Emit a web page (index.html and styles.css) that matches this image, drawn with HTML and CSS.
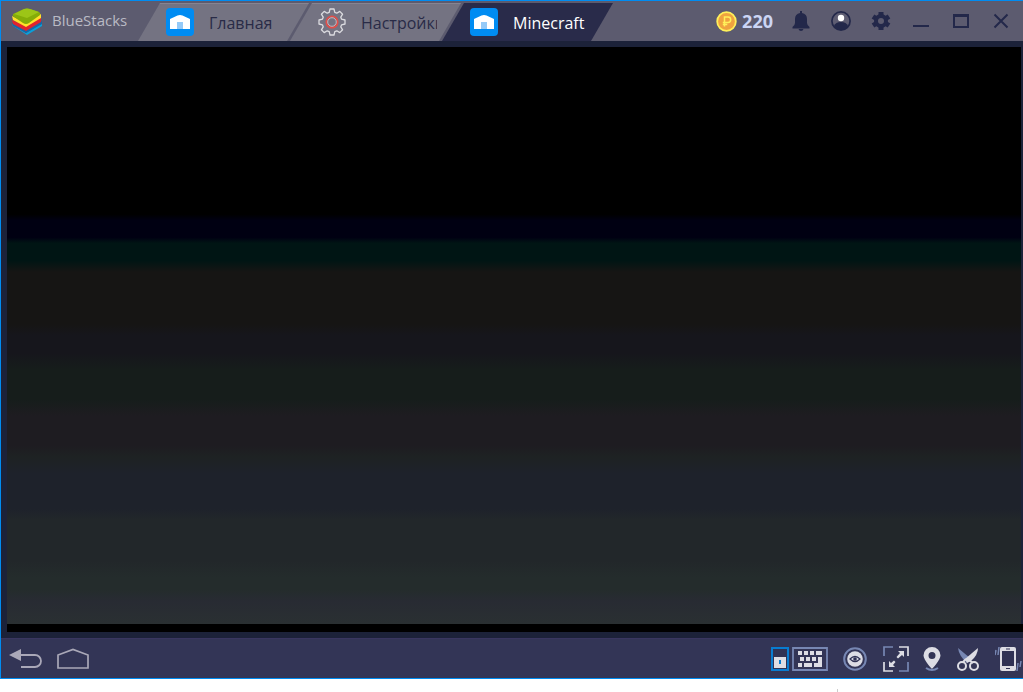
FILE: index.html
```html
<!DOCTYPE html>
<html lang="ru">
<head>
<meta charset="utf-8">
<meta name="viewport" content="width=device-width, initial-scale=1">
<title>BlueStacks</title>
<link rel="stylesheet" href="styles.css">
</head>
<body>
<svg class="defs" aria-hidden="true">
  <symbol id="app-home" viewBox="0 0 28 28">
    <rect width="28" height="28" rx="4" fill="#008cf2"/>
    <path d="M4 12V11L11.500 7.500q2.500-1 5 0L24 11v10H4z" fill="#fff"/>
    <path d="M11 14h6v7h-6z" fill="#94caf8"/>
  </symbol>
</svg>
<div class="window">
  <header class="titlebar">
    <div class="brand">
      <svg class="brand-logo" viewBox="0 0 30 27" aria-hidden="true">
        <path d="M0 16 14 25 30 15v3L15 27 12 25 1 18z" fill="#0b9fd8"/>
        <path d="M0 15 14 22 30 13v3L14 25 1 18z" fill="#1668a8"/>
        <path d="M0 12 14 18 29 9v5L14 23 1 16z" fill="#e0232e"/>
        <path d="M0 8 14 15 29 6v4L14 19 1 12z" fill="#ffe02b"/>
        <path d="M1 6Q0 8 2 9l9 6q3 2 6 0L28 7q1-2-1-3L18 1q-3-1-6 0z" fill="#84ad08"/>
        <path d="M2 6 12 1q3-1 6 0l9 3-12 6z" fill="#9cc517"/>
      </svg>
      <span class="brand-name">BlueStacks</span>
    </div>
    <nav class="tabs">
      <button class="tab" type="button"><svg class="tab-icon" aria-hidden="true"><use href="#app-home"/></svg><span class="tab-label">Главная</span></button>
      <button class="tab" type="button"><svg class="tab-icon" viewBox="-14 -14 28 28" aria-hidden="true">
        <path d="M-2.800-9.600-2-13H2L2.800-9.600 4.800-8.800 7.800-10.600 10.600-7.800 8.800-4.800 9.600-2.800 13-2V2L9.600 2.800 8.800 4.800 10.600 7.800 7.800 10.600 4.800 8.800 2.800 9.600 2 13H-2L-2.800 9.600-4.800 8.800-7.800 10.600-10.600 7.800-8.800 4.800-9.600 2.800-13 2V-2L-9.600-2.800-8.800-4.800-10.600-7.800-7.800-10.600-4.800-8.800z" fill="none" stroke="#dcdce0" stroke-width="1.300" stroke-linejoin="round"/>
        <circle r="5.700" fill="none" stroke="#e04e49" stroke-width="1.700"/><circle r="4.300" fill="none" stroke="#d5c6ca" stroke-width=".8"/></svg><span class="tab-label">Настройки</span></button>
      <button class="tab tab-active" type="button"><svg class="tab-icon" aria-hidden="true"><use href="#app-home"/></svg><span class="tab-label">Minecraft</span></button>
    </nav>
    <div class="controls">
      <button class="points" type="button">
        <svg class="coin" viewBox="0 0 21 21" aria-hidden="true">
          <circle cx="10.500" cy="10.500" r="9.300" fill="#efa33f" stroke="#fff05a" stroke-width="1.800"/>
          <path d="M8.500 15.500V6H12a2.700 2.700 0 0 1 0 5.400H6.800M6.800 13.500h4.500" fill="none" stroke="#fff05a" stroke-width="1.500"/>
        </svg>
        <span>220</span>
      </button>
      <button class="control" type="button" aria-label="Уведомления"><svg class="glyph" viewBox="0 0 20 20" aria-hidden="true">
        <path d="M9 2V0h2v2q5 1 5 6v4q0 2 2.500 4v1.500h-17V16Q4 14 4 12V8q0-5 5-6zM7.500 18h5q-.5 2-2.500 2t-2.500-2z" fill="#23284a"/></svg></button>
      <button class="control" type="button" aria-label="Аккаунт"><svg class="glyph" viewBox="0 0 20 20" aria-hidden="true">
        <circle cx="10" cy="10" r="9.100" fill="#5e5d72" stroke="#23284a" stroke-width="1.700"/>
        <path d="M3 15q1.500-4 7-4t7 4q-2.500 4-7 4t-7-4z" fill="#23284a"/><circle cx="10" cy="7" r="3.200" fill="#fff"/></svg></button>
      <button class="control" type="button" aria-label="Настройки"><svg class="glyph" viewBox="-10 -10 20 20" aria-hidden="true">
        <g stroke="#23284a" stroke-width="5"><path d="M0-9v4M0 5v4M-8-4.500-4-2M4 2l4 2.500M-8 4.500-4 2M4-2l4-2.500"/></g>
        <circle r="5" fill="none" stroke="#23284a" stroke-width="4"/></svg></button>
      <button class="control" type="button" aria-label="Свернуть"><svg class="glyph" viewBox="0 0 20 20" aria-hidden="true"><path d="M2 14h16v2H2z" fill="#23284a"/></svg></button>
      <button class="control" type="button" aria-label="Развернуть"><svg class="glyph" viewBox="0 0 20 20" aria-hidden="true"><path d="M2 3h16v14H2zM4 6v9h12V6z" fill="#23284a" fill-rule="evenodd"/></svg></button>
      <button class="control" type="button" aria-label="Закрыть"><svg class="glyph" viewBox="0 0 20 20" aria-hidden="true"><path d="m3.500 3.500 13 13m0-13-13 13" fill="none" stroke="#23284a" stroke-width="2"/></svg></button>
    </div>
  </header>
  <main class="stage">
    <div class="screen"></div>
  </main>
  <footer class="toolbar">
    <div class="nav">
      <button class="tool" type="button" aria-label="Назад"><svg width="34" height="24" viewBox="0 0 34 24" aria-hidden="true">
        <path d="M0 8 12 2v12z" fill="#aaa8b8"/><path d="M12 8h14a6 6 0 0 1 0 12H12" fill="none" stroke="#aaa8b8" stroke-width="1.800"/></svg></button>
      <button class="tool" type="button" aria-label="Домой"><svg width="32" height="24" viewBox="0 0 32 24" aria-hidden="true">
        <path d="M1 21V8l15-5.500L31 8v13z" fill="none" stroke="#aaa8b8" stroke-width="1.700"/></svg></button>
    </div>
    <div class="tools">
      <div class="keyboard-group">
        <button class="tool" type="button" aria-label="Блокировка клавиш"><svg width="18" height="24" viewBox="0 0 18 24" aria-hidden="true">
          <path d="M1 1h16v22H1z" fill="#303254" stroke="#087cd1" stroke-width="2"/><path d="M3 10h12v11H3z" fill="#dddde4"/><path d="M8 13h2v4H8z" fill="#087cd1"/></svg></button>
        <button class="tool" type="button" aria-label="Клавиатура"><svg width="36" height="24" viewBox="0 0 36 24" aria-hidden="true">
          <path d="M1 1h34v22H1z" fill="none" stroke="#7787b3" stroke-width="1.800"/>
          <path d="M6 4h4v4H6zm6 0h4v4h-4zm6 0h4v4h-4zm6 0h6v4h-6zM8 10h4v4H8zm6 0h4v4h-4zm6 0h4v4h-4zM6 16h4v4H6zm6 0h8v4h-8zm10 0h4v-6h4v10h-8z" fill="#dddde4"/></svg></button>
      </div>
      <button class="tool tool-eye" type="button" aria-label="Видимость"><svg width="24" height="24" viewBox="0 0 24 24" aria-hidden="true">
        <circle cx="12" cy="12" r="10.800" fill="none" stroke="#7787b3" stroke-width="2"/><circle cx="12" cy="12" r="7.800" fill="#dddde4"/>
        <path d="M7 12q5-5 10 0-5 5-10 0z" fill="#dddde4" stroke="#303254" stroke-width="1.200"/><circle cx="12" cy="12" r="1.800" fill="#303254"/></svg></button>
      <button class="tool tool-full" type="button" aria-label="Полный экран"><svg width="26" height="26" viewBox="0 0 26 26" aria-hidden="true">
        <path d="M1 10V1h9M25 16v9h-9" fill="none" stroke="#7787b3" stroke-width="1.700"/>
        <path d="M16 1h9v9M1 16v9h9" fill="none" stroke="#dddde4" stroke-width="1.700"/>
        <path d="M15 5h6v6l-2-2-4 3.500-1.500-1.500L17 7zM6 15v6h6l-2-2 2.500-3-1.500-1.500L8 17z" fill="#dddde4"/></svg></button>
      <button class="tool tool-pin" type="button" aria-label="Местоположение"><svg width="18" height="26" viewBox="0 0 18 26" aria-hidden="true">
        <path d="M9 1a8.500 8.500 0 0 0-8.500 8.500C.5 14 9 23 9 23s8.500-9 8.500-13.500A8.500 8.500 0 0 0 9 1zm0 5a3.500 3.500 0 1 1 0 7 3.500 3.500 0 0 1 0-7z" fill="#dddde4" fill-rule="evenodd"/><path d="M3 22q6 4 12 0" fill="none" stroke="#7787b3" stroke-width="2"/></svg></button>
      <button class="tool tool-cut" type="button" aria-label="Скриншот"><svg width="22" height="26" viewBox="0 0 22 26" aria-hidden="true">
        <path d="M1 2 13 12l-3 5Q2 10 1 2z" fill="#7787b3"/><path d="M21 2 8 13l2 4 4-2Q21 9 21 2z" fill="#dddde4"/>
        <path d="m9 13-3 3m6-2 4 3" stroke="#dddde4" stroke-width="2"/><circle cx="5" cy="20" r="4" fill="none" stroke="#dddde4" stroke-width="2"/><circle cx="17" cy="20" r="4" fill="none" stroke="#dddde4" stroke-width="2"/></svg></button>
      <button class="tool tool-shake" type="button" aria-label="Встряхнуть"><svg width="28" height="26" viewBox="0 0 28 26" aria-hidden="true">
        <rect x="5" y="1" width="16" height="24" rx="2" fill="#dddde4"/><path d="M7 5h12v15H7z" fill="#303254"/><path d="M11 3h4M11 22.500h4" stroke="#303254"/>
        <path d="m4 1-1 8M1 4 0 9m26 6-1 6m-2-4-1 8" fill="none" stroke="#7787b3" stroke-width="1.500"/></svg></button>
    </div>
  </footer>
</div>
<div class="desktop"><i class="speck"></i></div>
</body>
</html>
```
FILE: styles.css
```css
* { box-sizing: border-box; }
body {
  margin: 0;
  min-height: 100vh;
  display: flex;
  flex-direction: column;
  background: #fff;
  font-family: "Open Sans", "Noto Sans", sans-serif;
}
button { border: 0; padding: 0; margin: 0; background: none; color: inherit; font: inherit; cursor: pointer; }
svg { display: block; flex: none; }
.defs { position: absolute; width: 0; height: 0; }
.window {
  flex: 1;
  display: flex;
  flex-direction: column;
  border: 1px solid #008cf2;
  border-right: 0;
  background: #1c2239;
}
.titlebar { display: flex; height: 40px; background: #5c5b6f; }
.brand { display: flex; width: 137px; padding: 7px 0 0 11px; gap: 10px; color: #b9bac4; }
.brand-logo { width: 30px; height: 27px; }
.brand-name { font-size: 15px; line-height: 24px; }
.tabs { display: flex; padding-top: 2px; }
.tab {
  display: flex;
  align-items: center;
  width: 171px;
  height: 38px;
  margin-right: -19px;
  padding: 0 10px 0 28px;
  gap: 15px;
  clip-path: polygon(22px 0, 100% 0, calc(100% - 22px) 100%, 0 100%);
  background: linear-gradient(#858492 1px, #747382 1px);
  color: #292b47;
  font-size: 16px;
  line-height: 24px;
}
.tab-icon { width: 28px; height: 28px; }
.tab-label { width: 76px; padding-top: 2px; overflow: hidden; white-space: nowrap; text-align: left; }
.tab-active { background: #292b4a; color: #fff; }
.controls { display: flex; align-items: center; margin-left: auto; padding-right: 2px; }
.points { display: flex; align-items: center; gap: 5px; margin-right: 8px; color: #cbd5f4; font-size: 18px; font-weight: 700; line-height: 24px; }
.coin { width: 21px; height: 21px; }
.control { display: grid; place-items: center; width: 40px; height: 40px; }
.glyph { width: 20px; height: 20px; }
.stage { flex: 1; display: flex; padding: 6px 0 6px 6px; }
.screen {
  flex: 1;
  border-bottom: 8px solid #000;
  background:
    linear-gradient(#1c2239, #1c2239) right / 2px 100% no-repeat,
    linear-gradient(#000 29%, #000012 30%, #000012 33%, #001514 34%, #001514 37%, #161514 39%, #161514 48%, #16161c 50%, #16161c 53%, #161d1b 56%, #161d1b 61%, #1e1c21 64%, #1e1c21 69%, #1e2223 71%, #1e222b 74%, #1e222b 80%, #22272a 82%, #22272a 89%, #242c2c 92%, #242c2c 94%, #282b33 96%, #2a3032 100%);
}
.toolbar {
  display: flex;
  justify-content: space-between;
  align-items: center;
  height: 40px;
  padding: 0 0 0 8px;
  border-top: 1px solid #393660;
  background: #333556;
}
.nav { display: flex; gap: 14px; }
.tools { display: flex; align-items: center; gap: 16px; }
.keyboard-group { display: flex; gap: 3px; }
.tool-eye { margin-left: -1px; }
.tool-pin { margin-left: -2px; }
.desktop { height: 13px; padding: 10px 0 0 82%; }
.speck { display: block; width: 1px; height: 3px; margin-left: -2px; background: #ccc; }
```
